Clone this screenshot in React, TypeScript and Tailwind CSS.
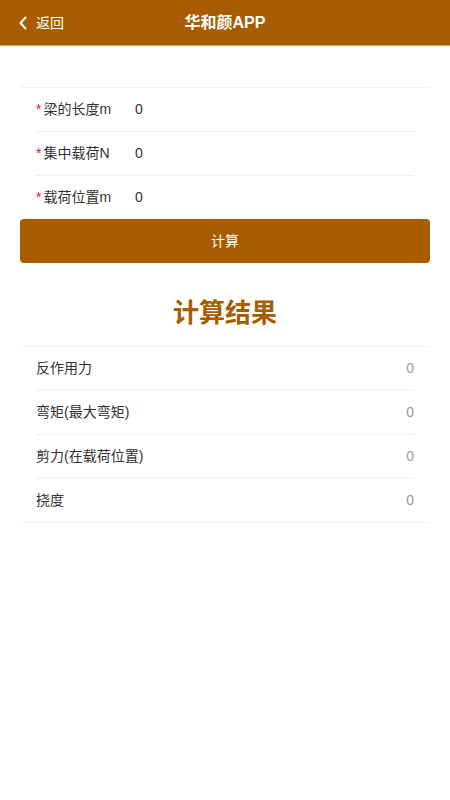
import React from 'react';

const brand = 'bg-[#a85c00]';

const fields = ['梁的长度m', '集中载荷N', '载荷位置m'];
const results = ['反作用力', '弯矩(最大弯矩)', '剪力(在载荷位置)', '挠度'];

export default function App() {
  return (
    <div className="min-h-[800px] bg-white text-[14px] text-[#323233]" style={{ fontFamily: '"Liberation Sans", "Noto Sans CJK SC", sans-serif' }}>
      {/* Nav bar */}
      <div className={`${brand} relative flex h-[46px] items-center border-b border-[#d9a46a] pl-[18px]`}>
        <div className="flex items-center gap-[8px] text-white">
          <svg width="10" height="14" viewBox="0 0 10 14" fill="none">
            <path d="M7.5 1.5 L2.5 7 L7.5 12.5" stroke="white" strokeWidth="2" strokeLinecap="round" strokeLinejoin="round" />
          </svg>
          <span className="text-[14px] leading-none">返回</span>
        </div>
        <div className="absolute inset-x-0 top-0 flex h-[45px] items-center justify-center pointer-events-none">
          <span className="text-[16px] font-bold text-white">华和颜APP</span>
        </div>
      </div>

      {/* Form */}
      <div className="mx-5 mt-[41px] border-t border-[#f2f3f5]">
        {fields.map((f, i) => (
          <div key={f} className="px-4">
            <div
              className={`flex items-center ${
                i < fields.length - 1 ? 'h-[44px] border-b border-[#ebedf0]' : 'h-[43px]'
              }`}
            >
              <div className="mr-3 w-[87px] shrink-0 whitespace-nowrap">
                <span className="mr-[2px] text-[#ee0a24]">*</span>
                {f}
              </div>
              <div className="text-[#323233]">0</div>
            </div>
          </div>
        ))}
      </div>

      <div className="mx-5">
        <button className={`${brand} flex h-[44px] w-full items-center justify-center rounded-[4px] text-[14px] text-white`}>
          计算
        </button>
      </div>

      {/* Results */}
      <div className="mt-[32px] flex h-[36px] items-center justify-center">
        <h2 className="text-[26px] font-bold leading-none text-[#a85c00]">计算结果</h2>
      </div>

      <div className="mx-5 mt-[15px] border-y border-[#f2f3f5]">
        {results.map((r, i) => (
          <div key={r} className="px-4">
            <div
              className={`flex items-center justify-between ${
                i < results.length - 1 ? 'h-[44px] border-b border-[#ebedf0]' : 'h-[43px]'
              }`}
            >
              <span>{r}</span>
              <span className="text-[#969799]">0</span>
            </div>
          </div>
        ))}
      </div>
    </div>
  );
}
